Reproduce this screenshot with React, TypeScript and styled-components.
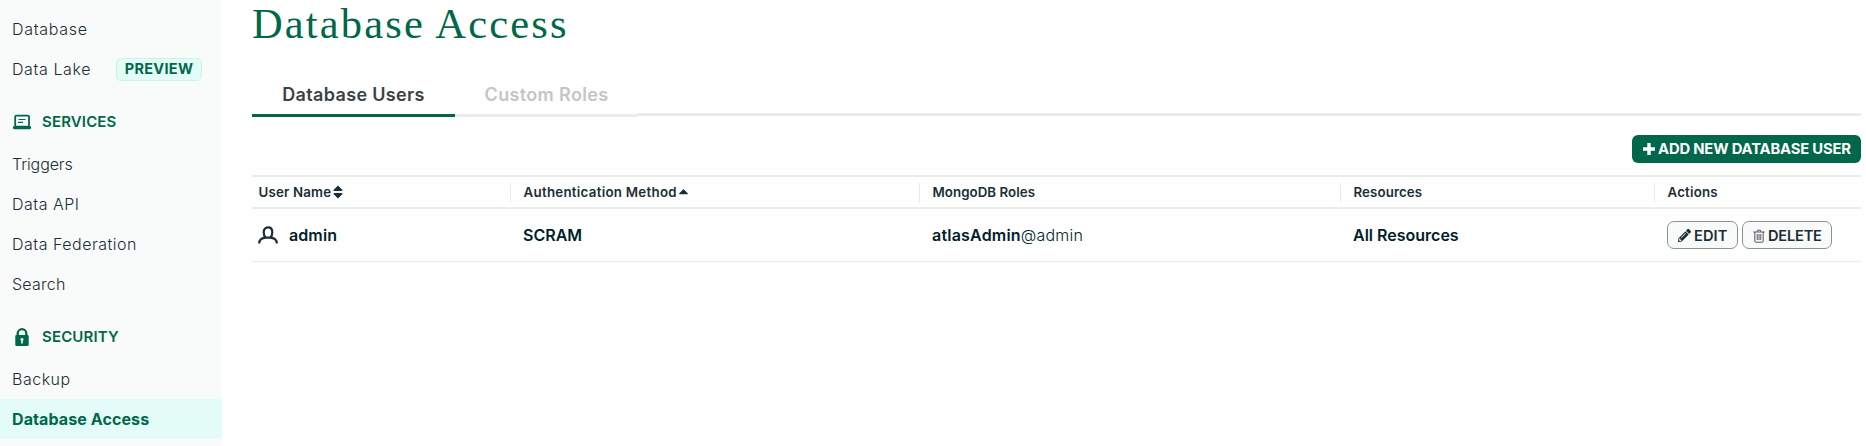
import React from 'react';
import styled, { createGlobalStyle } from 'styled-components';
import { FaSort, FaCaretUp, FaPencilAlt } from 'react-icons/fa';

const GlobalStyle = createGlobalStyle`
  * { box-sizing: border-box; }
  body {
    margin: 0;
    background: #fff;
    color: #001e2b;
    font-family: Inter, "Liberation Sans", sans-serif;
    overflow: hidden;
  }
`;

const Page = styled.div`
  display: flex;
  height: 446px;
`;

const Sidebar = styled.nav`
  flex: 0 0 222px;
  padding-top: 9px;
  background: #f9fbfa;
`;

const NavItem = styled.div<{ $active?: boolean }>`
  display: flex;
  align-items: center;
  height: 40px;
  padding-left: 12px;
  font-size: 16px;
  font-weight: ${p => (p.$active ? 700 : 300)};
  color: ${p => (p.$active ? '#00684a' : '#1c2d38')};
  background: ${p => (p.$active ? '#e3fcf7' : 'transparent')};
  white-space: nowrap;
`;

const Spaced = styled.span<{ $track?: number }>`
  letter-spacing: ${p => p.$track ?? 0}px;
  white-space: nowrap;
`;

const PreviewBadge = styled.span`
  display: flex;
  align-items: center;
  justify-content: center;
  width: 86px;
  height: 23px;
  margin-left: auto;
  margin-right: 20px;
  padding-bottom: 1px;
  border: 1px solid #c0fae6;
  border-radius: 5px;
  background: #e3fcf7;
  color: #00684a;
  font-size: 14.5px;
  font-weight: 700;
`;

const NavHeading = styled.div`
  display: flex;
  align-items: center;
  height: 55px;
  padding: 10px 0 0 12px;
  color: #00684a;
  font-size: 15px;
  font-weight: 600;

  svg { width: 20px; height: 20px; margin-right: 10px; }
`;

const Main = styled.main`
  flex: 1;
  min-width: 0;
  padding: 0 5px 0 30px;
`;

const Title = styled.h1`
  height: 77px;
  margin: 0;
  line-height: 47px;
  font-family: "Liberation Serif", serif;
  font-size: 42.5px;
  font-weight: 400;
  letter-spacing: 2.15px;
  color: #00684a;
`;

const Tabs = styled.div`
  display: flex;
  height: 40px;
`;

const Tab = styled.div<{ $active?: boolean; $width: number }>`
  display: flex;
  justify-content: center;
  width: ${p => p.$width}px;
  height: 40px;
  padding-top: 7px;
  line-height: 22px;
  border-bottom: 3px solid ${p => (p.$active ? '#00684a' : '#e8edeb')};
  color: ${p => (p.$active ? '#3d4247' : '#c1c7c6')};
  font-size: 18px;
  font-weight: 600;
`;

const TabRule = styled.div`
  flex: 1;
  height: 39px;
  border-bottom: 3px solid #e8edeb;
`;

const Toolbar = styled.div`
  display: flex;
  justify-content: flex-end;
  height: 58px;
  padding-top: 18px;
`;

const AddButton = styled.button`
  display: flex;
  align-items: center;
  width: 229px;
  height: 28px;
  padding: 0 0 1px 11px;
  border: 0;
  border-radius: 6px;
  background: #00684a;
  color: #fff;
  font: 700 14.8px Inter, sans-serif;

  svg { width: 12px; height: 12px; margin-right: 3px; }
`;

const columns = '258px 409px 421px 314px 1fr';

const HeaderRow = styled.div`
  display: grid;
  grid-template-columns: ${columns};
  align-items: center;
  height: 34px;
  border-top: 2px solid #e8edeb;
  border-bottom: 2px solid #e8edeb;
`;

const HeaderCell = styled.div<{ $first?: boolean }>`
  display: flex;
  align-items: center;
  height: 20px;
  margin-bottom: -1px;
  padding: 0 0 2px ${p => (p.$first ? 6.5 : 12.5)}px;
  border-left: ${p => (p.$first ? 0 : 1)}px solid #e8edeb;
  color: #1c2d38;
  font-size: 13.3px;
  font-weight: 600;

  svg { margin-left: -1px; }
`;

const BodyRow = styled(HeaderRow)`
  height: 53px;
  border-top: 0;
  border-bottom: 1px solid #e8edeb;
`;

const BodyCell = styled.div<{ $first?: boolean }>`
  display: flex;
  align-items: center;
  padding-left: ${p => (p.$first ? 6 : 13)}px;
  font-size: 16px;
  font-weight: 600;
`;

const UserIcon = styled.svg`
  width: 20px;
  height: 18px;
  margin-right: 11px;
`;

const Light = styled.span`
  font-weight: 300;
`;

const ActionButton = styled.button<{ $width: number; $gap: number }>`
  display: flex;
  align-items: center;
  gap: ${p => p.$gap}px;
  width: ${p => p.$width}px;
  height: 28px;
  margin-right: 4px;
  padding: 1px 0 0 10px;
  border: 1px solid #889397;
  border-radius: 7px;
  background: #f9fbfa;
  color: #1c2d38;
  font: 600 14.6px Inter, sans-serif;
`;

const PlusIcon = () => (
  <svg viewBox="0 0 12 12" fill="#fff">
    <path d="M4.300 0h3.400v4.300H12v3.400H7.700V12H4.300V7.700H0V4.300h4.300z" />
  </svg>
);

const ServicesIcon = () => (
  <svg viewBox="0 0 20 20" fill="none">
    <rect x="3.200" y="3.700" width="13.800" height="11" rx="1" stroke="#00684a" strokeWidth="1.800" />
    <path d="M6.500 7.500h7M6 10.300h5" stroke="#00684a" strokeWidth="1.200" />
    <path d="M1 14.200h18v1.500a1.500 1.500 0 0 1-1.500 1.500h-15A1.500 1.500 0 0 1 1 15.700z" fill="#00684a" />
  </svg>
);

const LockIcon = () => (
  <svg viewBox="0 0 20 20" fill="none">
    <path d="M5.700 9V6.500a4.300 4.300 0 0 1 8.600 0V9" stroke="#00684a" strokeWidth="2.300" />
    <path
      fillRule="evenodd"
      fill="#00684a"
      d="M4.500 8h11a1.200 1.200 0 0 1 1.200 1.200v8.600a1.200 1.200 0 0 1-1.200 1.200h-11a1.200 1.200 0 0 1-1.200-1.200V9.200A1.200 1.200 0 0 1 4.500 8zM10 11a1.500 1.500 0 0 0-.8 2.800V16.500h1.600v-2.700A1.500 1.500 0 0 0 10 11z"
    />
  </svg>
);

const TrashIcon = () => (
  <svg width="12" height="14" viewBox="0 0 12 14" fill="none" stroke="#5c5266">
    <path d="M.3 3h11.400M4 3l.6-1.800h2.800L8 3M1.800 3v9.200q0 1 1 1h6.400q1 0 1-1V3M4.200 5v6M6 5v6M7.800 5v6" />
  </svg>
);

export default function App() {
  return (
    <>
      <GlobalStyle />
      <Page>
        <Sidebar>
          <NavItem><Spaced $track={0.7}>Database</Spaced></NavItem>
          <NavItem>
            <Spaced $track={0.6}>Data Lake</Spaced>
            <PreviewBadge><Spaced $track={0.3}>PREVIEW</Spaced></PreviewBadge>
          </NavItem>
          <NavHeading><ServicesIcon /><Spaced $track={0.15}>SERVICES</Spaced></NavHeading>
          <NavItem><Spaced $track={-0.1}>Triggers</Spaced></NavItem>
          <NavItem><Spaced $track={0.5}>Data API</Spaced></NavItem>
          <NavItem><Spaced $track={0.5}>Data Federation</Spaced></NavItem>
          <NavItem><Spaced $track={0.25}>Search</Spaced></NavItem>
          <NavHeading><LockIcon /><Spaced $track={0.15}>SECURITY</Spaced></NavHeading>
          <NavItem><Spaced $track={0.5}>Backup</Spaced></NavItem>
          <NavItem $active><Spaced $track={0.1}>Database Access</Spaced></NavItem>
        </Sidebar>
        <Main>
          <Title>Database Access</Title>
          <Tabs>
            <Tab $active $width={203}><Spaced $track={0.34}>Database Users</Spaced></Tab>
            <Tab $width={183}><Spaced $track={0.35}>Custom Roles</Spaced></Tab>
            <TabRule />
          </Tabs>
          <Toolbar>
            <AddButton><PlusIcon /><Spaced $track={-0.17}>ADD NEW DATABASE USER</Spaced></AddButton>
          </Toolbar>
          <HeaderRow>
            <HeaderCell $first><Spaced $track={0.18}>User Name</Spaced><FaSort size={16} /></HeaderCell>
            <HeaderCell><Spaced $track={0.28}>Authentication Method</Spaced><FaCaretUp size={15} /></HeaderCell>
            <HeaderCell><Spaced $track={0.05}>MongoDB Roles</Spaced></HeaderCell>
            <HeaderCell><Spaced $track={0.1}>Resources</Spaced></HeaderCell>
            <HeaderCell><Spaced $track={0.2}>Actions</Spaced></HeaderCell>
          </HeaderRow>
          <BodyRow>
            <BodyCell $first>
              <UserIcon viewBox="0 0 20 18" fill="none" stroke="#1c2d38" strokeWidth="2.200">
                <path d="M7.600 11.600C6 10 5.700 8 5.700 6.200C5.700 3.300 7.300 1.400 10 1.400s4.300 1.900 4.300 4.800c0 1.800-.3 3.800-1.900 5.400" />
                <path d="M1.200 17.500c0-4 2.800-5.700 6.800-5.900h4c4 .2 6.800 1.900 6.800 5.900" />
              </UserIcon>
              <Spaced $track={0.1}>admin</Spaced>
            </BodyCell>
            <BodyCell><Spaced>SCRAM</Spaced></BodyCell>
            <BodyCell><Spaced $track={0.2}>atlasAdmin<Light>@admin</Light></Spaced></BodyCell>
            <BodyCell><Spaced>All Resources</Spaced></BodyCell>
            <BodyCell>
              <ActionButton $width={71} $gap={3}><FaPencilAlt size={13} /><Spaced $track={0.1}>EDIT</Spaced></ActionButton>
              <ActionButton $width={90} $gap={3}><TrashIcon /><Spaced $track={-0.2}>DELETE</Spaced></ActionButton>
            </BodyCell>
          </BodyRow>
        </Main>
      </Page>
    </>
  );
}
